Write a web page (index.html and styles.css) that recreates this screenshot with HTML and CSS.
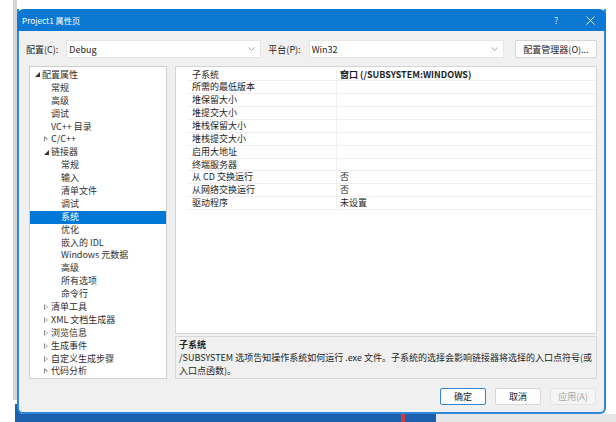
FILE: index.html
```html
<!DOCTYPE html>
<html lang="zh-CN">
<head>
    <meta charset="UTF-8">
    <title>Project1 属性页</title>
    <link rel="stylesheet" href="styles.css">
</head>
<body>
    <div class="desktop">
        <div class="edge-left"></div>
        <div class="taskbar"></div>

        <div class="dialog">
            <div class="titlebar">
                <span class="title">Project1 属性页</span>
                <span class="help">?</span>
                <span class="close">
                    <svg width="9" height="9" viewBox="0 0 9 9"><path d="M0.5 0.5L8.5 8.5M8.5 0.5L0.5 8.5" stroke="#fff" stroke-width="1"/></svg>
                </span>
            </div>

            <div class="config-row">
                <label class="config-label">配置(C):</label>
                <div class="combo">
                    <span>Debug</span>
                    <svg class="chev" width="7" height="4" viewBox="0 0 7 4"><path d="M0.5 0.5L3.5 3.3L6.5 0.5" fill="none" stroke="#999" stroke-width="0.9"/></svg>
                </div>
                <label class="config-label">平台(P):</label>
                <div class="combo">
                    <span>Win32</span>
                    <svg class="chev" width="7" height="4" viewBox="0 0 7 4"><path d="M0.5 0.5L3.5 3.3L6.5 0.5" fill="none" stroke="#999" stroke-width="0.9"/></svg>
                </div>
                <button class="btn manager">配置管理器(O)...</button>
            </div>

            <div class="main">
                <div class="tree">
                    <div class="node lv0"><span class="tri open"></span>配置属性</div>
                    <div class="node lv1">常规</div>
                    <div class="node lv1">高级</div>
                    <div class="node lv1">调试</div>
                    <div class="node lv1">VC++ 目录</div>
                    <div class="node lv1"><span class="tri shut"></span>C/C++</div>
                    <div class="node lv1"><span class="tri open"></span>链接器</div>
                    <div class="node lv2">常规</div>
                    <div class="node lv2">输入</div>
                    <div class="node lv2">清单文件</div>
                    <div class="node lv2">调试</div>
                    <div class="node lv2 selected">系统</div>
                    <div class="node lv2">优化</div>
                    <div class="node lv2">嵌入的 IDL</div>
                    <div class="node lv2">Windows 元数据</div>
                    <div class="node lv2">高级</div>
                    <div class="node lv2">所有选项</div>
                    <div class="node lv2">命令行</div>
                    <div class="node lv1"><span class="tri shut"></span>清单工具</div>
                    <div class="node lv1"><span class="tri shut"></span>XML 文档生成器</div>
                    <div class="node lv1"><span class="tri shut"></span>浏览信息</div>
                    <div class="node lv1"><span class="tri shut"></span>生成事件</div>
                    <div class="node lv1"><span class="tri shut"></span>自定义生成步骤</div>
                    <div class="node lv1"><span class="tri shut"></span>代码分析</div>
                </div>

                <div class="right">
                    <div class="grid">
                        <div class="prop"><span class="name">子系统</span><span class="value bold">窗口 (/SUBSYSTEM:WINDOWS)</span></div>
                        <div class="prop"><span class="name">所需的最低版本</span><span class="value"></span></div>
                        <div class="prop"><span class="name">堆保留大小</span><span class="value"></span></div>
                        <div class="prop"><span class="name">堆提交大小</span><span class="value"></span></div>
                        <div class="prop"><span class="name">堆栈保留大小</span><span class="value"></span></div>
                        <div class="prop"><span class="name">堆栈提交大小</span><span class="value"></span></div>
                        <div class="prop"><span class="name">启用大地址</span><span class="value"></span></div>
                        <div class="prop"><span class="name">终端服务器</span><span class="value"></span></div>
                        <div class="prop"><span class="name">从 CD 交换运行</span><span class="value">否</span></div>
                        <div class="prop"><span class="name">从网络交换运行</span><span class="value">否</span></div>
                        <div class="prop"><span class="name">驱动程序</span><span class="value">未设置</span></div>
                    </div>
                    <div class="desc">
                        <div class="desc-title">子系统</div>
                        <div class="desc-text">/SUBSYSTEM 选项告知操作系统如何运行 .exe 文件。子系统的选择会影响链接器将选择的入口点符号(或<br>入口点函数)。</div>
                    </div>
                </div>
            </div>

            <div class="buttons">
                <button class="btn default">确定</button>
                <button class="btn">取消</button>
                <button class="btn disabled">应用(A)</button>
            </div>
        </div>

        <div class="strip">
            <div class="strip-blue"><span class="strip-mark"></span></div>
            <div class="strip-gray"></div>
        </div>
    </div>
</body>
</html>
```

FILE: styles.css
```css
html, body {
    margin: 0;
    padding: 0;
    background: #ffffff;
}
body {
    font-family: "Noto Sans CJK SC", "Noto Sans", sans-serif;
    font-size: 9px;
    color: #1e1e1e;
}
.desktop {
    position: relative;
    width: 616px;
    height: 422px;
    padding-top: 9px;
    box-sizing: border-box;
    overflow: hidden;
}
.edge-left {
    position: absolute;
    left: 13px;
    top: 0;
    width: 4px;
    height: 400px;
    background: #d4d4d4;
}
.taskbar {
    position: absolute;
    left: 15px;
    top: 404px;
    width: 6px;
    height: 18px;
    background: #1c5fae;
}
.dialog {
    position: relative;
    margin-left: 17px;
    width: 589px;
    height: 405px;
    box-sizing: border-box;
    border: 2px solid #2b87dc;
    border-top: none;
    border-radius: 0 0 6px 6px;
    background: #f0f0f0;
    display: flex;
    flex-direction: column;
}
.titlebar {
    height: 22px;
    flex-shrink: 0;
    margin: 0 -2px;
    padding: 0 0 0 5px;
    background: #0b78d4;
    color: #ffffff;
    display: flex;
    align-items: center;
    border-radius: 7px 7px 0 0;
}
.title {
    font-size: 8.2px;
    flex: 1;
}
.help {
    font-size: 9px;
    width: 32px;
    color: #d8e8f8;
}
.close {
    width: 20px;
    display: flex;
    align-items: center;
}
.config-row {
    display: flex;
    align-items: center;
    height: 18px;
    flex-shrink: 0;
    margin: 9px 7px 8px 7px;
}
.config-label {
    margin-right: 8px;
}
.combo {
    width: 195px;
    height: 18px;
    box-sizing: border-box;
    background: #ffffff;
    border: 1px solid #e6e6e6;
    display: flex;
    align-items: center;
    justify-content: space-between;
    padding: 0 5px 0 2px;
    margin-right: 7px;
}
.btn {
    font-family: inherit;
    font-size: 9px;
    color: #1e1e1e;
    background: #fdfdfd;
    border: 1px solid #d6d6d6;
    border-radius: 2px;
    box-sizing: border-box;
    height: 18px;
    padding: 0;
}
.manager {
    width: 82px;
    margin-left: auto;
}
.main {
    display: flex;
    gap: 8px;
    height: 313px;
    flex-shrink: 0;
    margin: 0 7px 0 10px;
}
.tree {
    width: 138px;
    box-sizing: border-box;
    background: #ffffff;
    border: 1px solid #cfcfcf;
    padding-top: 2px;
    overflow: hidden;
}
.node {
    height: 12.9px;
    line-height: 12.9px;
    color: #303030;
    white-space: nowrap;
    display: flex;
    align-items: center;
}
.lv0 { padding-left: 4px; }
.lv1 { padding-left: 21px; }
.lv2 { padding-left: 31px; }
.lv1 .tri { margin-left: -8px; }
.tri {
    width: 8px;
    height: 8px;
    display: inline-block;
    position: relative;
}
.tri.open::before {
    content: "";
    position: absolute;
    left: 1px;
    top: 1px;
    border-left: 5px solid transparent;
    border-bottom: 5px solid #333333;
}
.tri.shut::before {
    content: "";
    position: absolute;
    left: 1px;
    top: 0.5px;
    width: 0;
    height: 0;
    border-top: 3.5px solid transparent;
    border-bottom: 3.5px solid transparent;
    border-left: 4px solid #8a8a8a;
}
.tri.shut::after {
    content: "";
    position: absolute;
    left: 1.8px;
    top: 2px;
    border-top: 2px solid transparent;
    border-bottom: 2px solid transparent;
    border-left: 2.3px solid #ffffff;
}
.node.selected {
    background: #0078d7;
    color: #ffffff;
}
.right {
    flex: 1;
    display: flex;
    flex-direction: column;
    gap: 2px;
}
.grid {
    flex: 1;
    background: #ffffff;
    border: 1px solid #d4d4d4;
    padding-top: 1.5px;
    padding-left: 11px;
}
.prop {
    display: flex;
    height: 12.87px;
    line-height: 12.4px;
    border-bottom: 0.5px solid #f0f0f0;
    box-sizing: border-box;
}
.name {
    width: 150px;
    padding-left: 5px;
    box-sizing: border-box;
    border-right: 0.5px solid #f0f0f0;
}
.value {
    padding-left: 3px;
}
.bold {
    font-weight: bold;
}
.desc {
    height: 43px;
    box-sizing: border-box;
    background: #f0f0f0;
    border: 1px solid #d8d8d8;
    padding: 1px 3px 0 3px;
    line-height: 13px;
}
.desc-title {
    font-weight: bold;
}
.buttons {
    display: flex;
    justify-content: flex-end;
    gap: 9px;
    margin: 9px 8px 0 0;
}
.buttons .btn {
    width: 46px;
    height: 17px;
}
.btn.default {
    border-color: #2f86d6;
}
.btn.disabled {
    color: #a8a8a8;
    background: #f4f4f4;
    border-color: #e4e4e4;
}
.strip {
    display: flex;
    height: 8px;
    margin-left: 17px;
}
.strip-blue {
    position: relative;
    width: 419px;
    background: #1c5fae;
}
.strip-mark {
    position: absolute;
    left: 384px;
    top: 0;
    width: 4px;
    height: 8px;
    background: #d23a3a;
}
.strip-gray {
    flex: 1;
    background: #e6e6e6;
}
```
